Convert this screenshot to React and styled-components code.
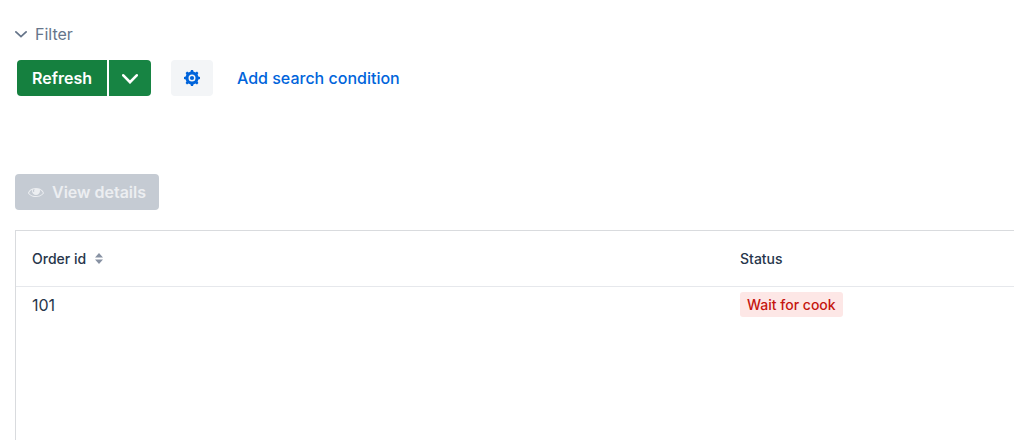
import React from "react";
import styled, { createGlobalStyle } from "styled-components";

const GlobalStyle = createGlobalStyle`
  *, *::before, *::after { box-sizing: border-box; }
  body {
    margin: 0;
    background: #fff;
    color: #27364b;
    font-family: Inter, "Liberation Sans", sans-serif;
    font-size: 16px;
    line-height: 24px;
    overflow: hidden;
  }
  button { font: inherit; border: 0; cursor: pointer; }
`;

const Page = styled.main`
  display: flex;
  flex-direction: column;
  min-height: 100vh;
  padding: 22px 0 0 15px;
`;

const Summary = styled.button`
  display: flex;
  align-items: center;
  align-self: flex-start;
  gap: 8px;
  padding: 0;
  background: none;
  color: #66758a;
`;

const FilterBar = styled.div`
  display: flex;
  align-items: center;
  margin-top: 14px;
  padding-left: 2px;
`;

const SplitButton = styled.div`
  display: flex;
  gap: 2px;
  margin-right: 20px;
`;

const Button = styled.button`
  display: inline-flex;
  align-items: center;
  justify-content: center;
  gap: 8px;
  height: 36px;
  padding: 0 ${(p) => p.$pad || 0}px;
  min-width: 42px;
  border-radius: ${(p) => p.$radius || "4px"};
  background: ${(p) => p.$bg};
  color: ${(p) => p.$color || "#fff"};
  font-weight: 600;
`;

const Link = styled.a`
  margin-left: 24px;
  color: #0064db;
  font-weight: 500;
  text-decoration: none;
`;

const Actions = styled.div`
  display: flex;
  margin-top: 78px;
`;

const Grid = styled.section`
  flex: 1;
  margin-top: 20px;
  border: solid #d9dbde;
  border-width: 1px 0 0 1px;
`;

const Table = styled.table`
  width: 100%;
  table-layout: fixed;
  border-collapse: separate;
  border-spacing: 0;
`;

const HeadCell = styled.th`
  width: ${(p) => p.$width || "auto"};
  height: 56px;
  padding: 0 16px;
  border-bottom: 1px solid #e6e8ec;
  font-size: 14px;
  font-weight: 500;
  text-align: left;
`;

const Cell = styled.td`
  padding: 5px 16px;
`;

const Sorter = styled.button`
  display: flex;
  align-items: center;
  gap: 8px;
  padding: 0;
  background: none;
  color: inherit;
`;

const Badge = styled.span`
  display: block;
  width: fit-content;
  padding: 0 7px;
  border-radius: 3px;
  background: #fde7e6;
  color: #c5160f;
  font-size: 14px;
  font-weight: 500;
  line-height: 25px;
`;

const Chevron = ({ size, height, stroke }) => (
  <svg width={size} height={height} viewBox={`0 0 ${size} ${height}`} fill="none" stroke="currentColor" strokeWidth={stroke} strokeLinecap="round" strokeLinejoin="miter" aria-hidden="true">
    <path d={`M${stroke / 2} ${stroke / 2 + 1}L${size / 2} ${height - stroke / 2 - 0.5}L${size - stroke / 2} ${stroke / 2 + 1}`} />
  </svg>
);

const CogIcon = () => (
  <svg width="16" height="16" viewBox="0 0 16 16" fill="currentColor" aria-hidden="true">
    <path fillRule="evenodd" d="M16 9V7l-1.7-.6c-.2-.6-.4-1.2-.7-1.8l.8-1.6L13 1.600l-1.600.8c-.5-.3-1.100-.6-1.800-.7L9 0H7l-.6 1.700c-.6.2-1.200.4-1.700.7l-1.600-.8-1.500 1.500.8 1.600c-.3.5-.5 1.100-.7 1.700L0 7v2l1.700.6c.2.6.4 1.200.7 1.800l-.8 1.600L3 14.400l1.600-.8c.5.3 1.100.6 1.800.7L7 16h2l.6-1.700c.6-.2 1.200-.4 1.800-.7l1.600.8 1.400-1.400-.8-1.600c.3-.5.6-1.100.7-1.800L16 9zM8 11.500a3.500 3.500 0 1 1 0-7 3.500 3.500 0 0 1 0 7z" />
    <circle cx="8" cy="8" r="2.100" />
  </svg>
);

const EyeIcon = () => (
  <svg width="16" height="16" viewBox="0 0 16 16" fill="currentColor" aria-hidden="true">
    <path d="M8 3.900c-6.700 0-8 5.100-8 5.100s2.200 4.100 7.900 4.100 8.100-4 8.100-4-1.300-5.200-8-5.200zM5.300 5.400c.5-.3 1.300-.3 1.300-.3s-.5.9-.5 1.600c0 .7.2 1.100.2 1.100l-1.100.2c0 0-.3-.5-.3-1.200 0-.8.4-1.400.4-1.400zM7.900 12.100c-4.100 0-6.200-2.300-6.800-3.200.3-.7 1.100-2.200 3.100-3.200-.1.4-.2.8-.2 1.300 0 2.200 1.800 4 4 4s4-1.800 4-4c0-.5-.1-.9-.2-1.300 2 .9 2.800 2.500 3.100 3.200-.7.9-2.800 3.200-7 3.200z" />
  </svg>
);

const SortIcon = () => (
  <svg width="10" height="12" viewBox="0 0 10 12" fill="#8892a3" aria-hidden="true">
    <path d="M1 4.500L5 0L9 4.500zM1 6.500L5 11L9 6.500z" />
  </svg>
);

export default function App() {
  return (
    <>
      <GlobalStyle />
      <Page>
        <Summary type="button" aria-expanded="true">
          <Chevron size={12} height={8} stroke={1.8} />
          Filter
        </Summary>
        <FilterBar>
          <SplitButton>
            <Button type="button" $bg="#15803f" $pad={15} $radius="4px 0 0 4px">Refresh</Button>
            <Button type="button" $bg="#178443" $radius="0 4px 4px 0" aria-label="Refresh options">
              <Chevron size={16} height={11} stroke={2.6} />
            </Button>
          </SplitButton>
          <Button type="button" $bg="#f3f5f7" $color="#0064db" aria-label="Filter settings">
            <CogIcon />
          </Button>
          <Link href="#add-condition">Add search condition</Link>
        </FilterBar>
        <Actions>
          <Button type="button" disabled $bg="#c5cbd3" $color="#eceef1" $pad={13}>
            <EyeIcon />
            View details
          </Button>
        </Actions>
        <Grid>
          <Table>
            <thead>
              <tr>
                <HeadCell scope="col">
                  <Sorter type="button">
                    Order id
                    <SortIcon />
                  </Sorter>
                </HeadCell>
                <HeadCell scope="col" $width="290px">Status</HeadCell>
              </tr>
            </thead>
            <tbody>
              <tr>
                <Cell>101</Cell>
                <Cell><Badge>Wait for cook</Badge></Cell>
              </tr>
            </tbody>
          </Table>
        </Grid>
      </Page>
    </>
  );
}
